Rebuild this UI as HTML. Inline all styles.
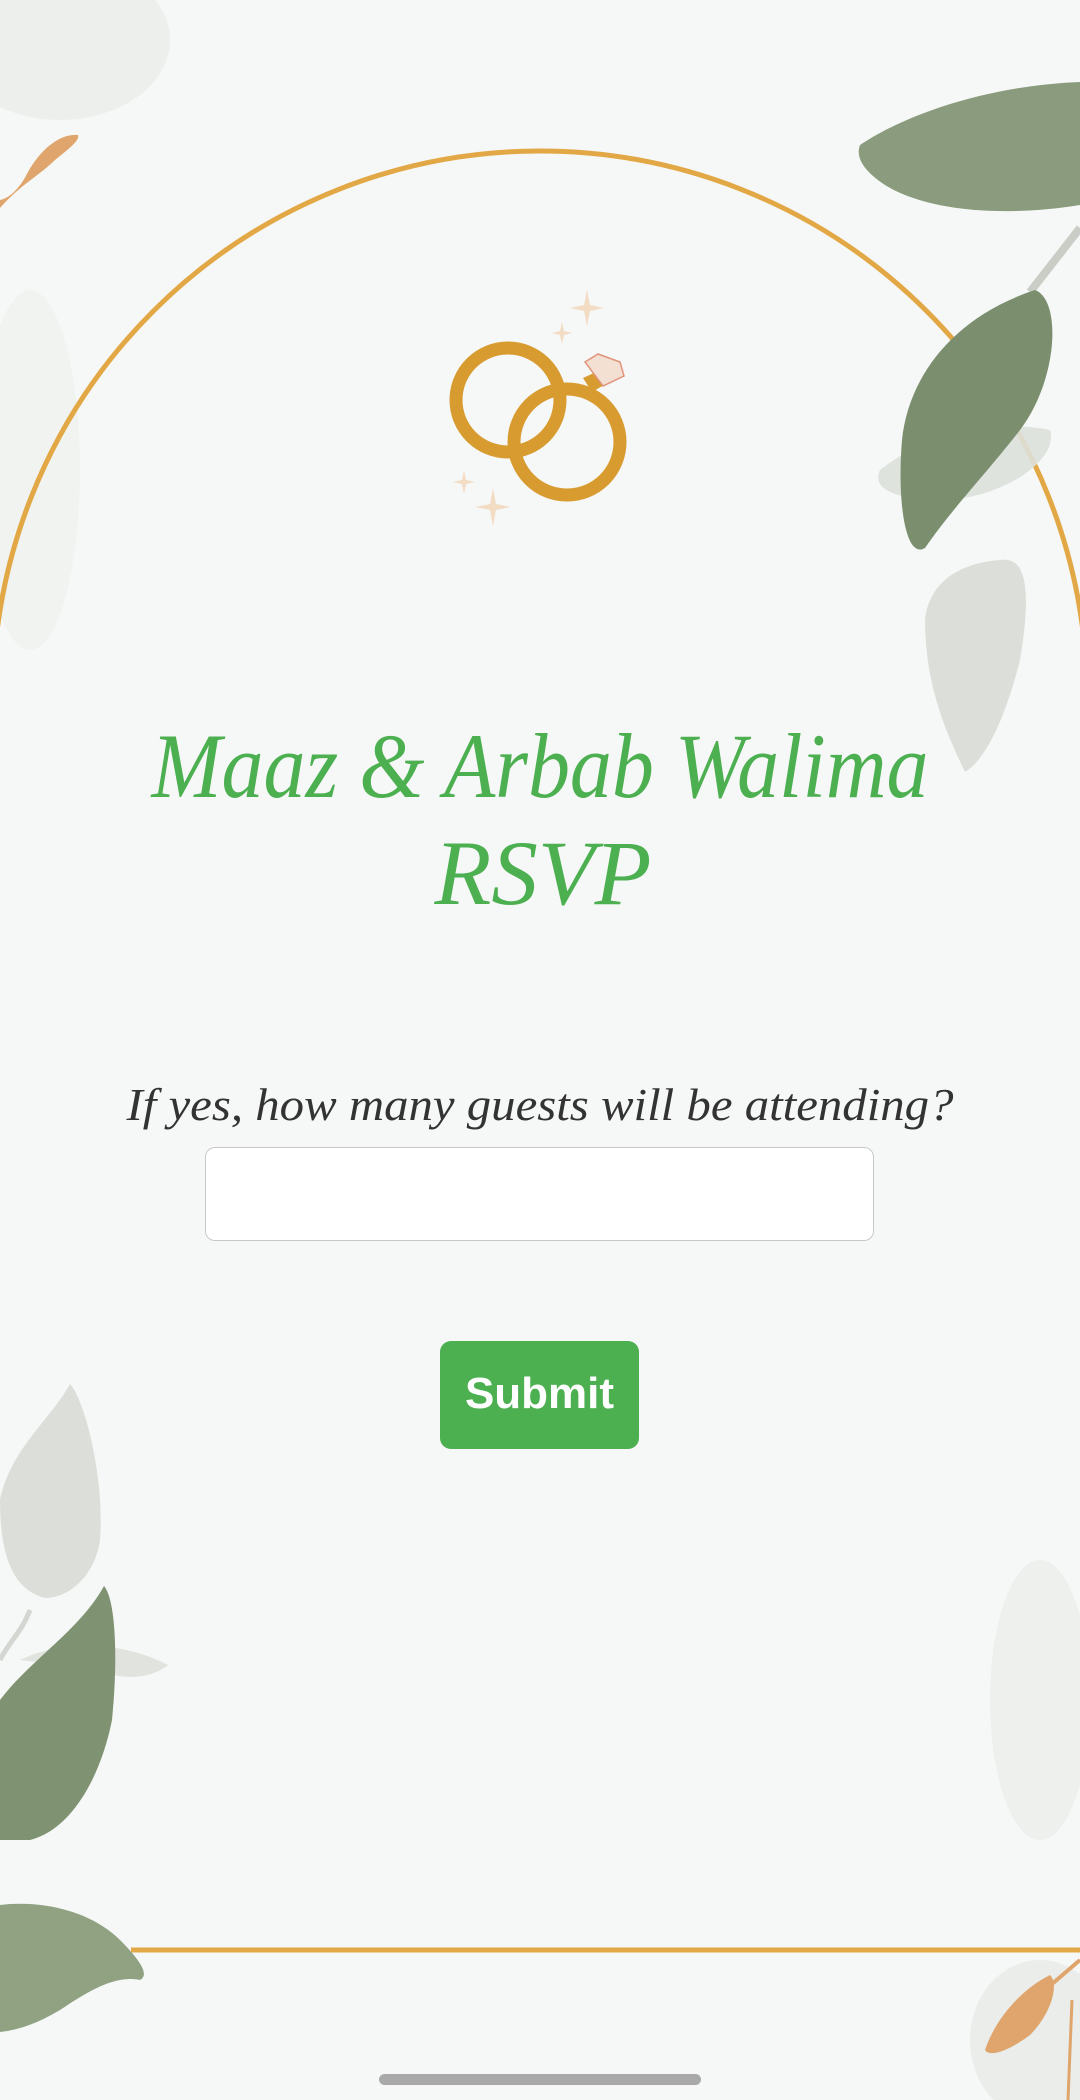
<!DOCTYPE html>
<html><head><meta charset="utf-8"><style>
html,body{margin:0;padding:0}
body{width:1080px;height:2100px;background:#f6f8f7;position:relative;overflow:hidden;font-family:"Liberation Sans",sans-serif}
svg{position:absolute;left:0;top:0}
.inp{position:absolute;left:205px;top:1147px;width:669px;height:94px;background:#fff;border:1.5px solid #c9c9c9;border-radius:10px;box-sizing:border-box}
.btn{position:absolute;left:440px;top:1341px;width:199px;height:108px;background:#4caf50;border-radius:11px;color:#fff;font-weight:bold;font-size:44px;text-align:center;line-height:106px}
.bar{position:absolute;left:379px;top:2074px;width:322px;height:11px;border-radius:6px;background:#a9a9a9}
</style></head><body>
<svg width="1080" height="2100" viewBox="0 0 1080 2100">
  <ellipse cx="60" cy="40" rx="110" ry="80" fill="#e6e8e4" opacity="0.55"/>
  <ellipse cx="30" cy="470" rx="50" ry="180" fill="#e8eae7" opacity="0.4"/>
  <ellipse cx="1040" cy="1700" rx="50" ry="140" fill="#e6e8e5" opacity="0.5"/>
  <ellipse cx="1040" cy="2040" rx="70" ry="80" fill="#e6e8e4" opacity="0.7"/>
  <path d="M -7 698 A 547 547 0 0 1 1087 698" fill="none" stroke="#e3a846" stroke-width="5"/>
  <line x1="131" y1="1950" x2="1080" y2="1950" stroke="#e3a846" stroke-width="5"/>
  <path d="M0 208 C20 185 40 175 55 160 C70 148 80 140 78 135 C60 133 40 150 28 172 C20 188 10 198 0 200Z" fill="#dfa56c"/>
  <path d="M1030 292 L1080 228" stroke="#c9cdc6" stroke-width="8"/>
  <path d="M880 470 C930 430 1000 420 1050 430 C1060 460 1000 500 940 500 C900 500 870 490 880 470Z" fill="#dde0da" opacity="0.9"/>
  <path d="M1000 560 C1030 555 1030 600 1020 660 C1005 720 985 760 965 772 C950 740 925 690 925 620 C930 575 970 562 1000 560Z" fill="#dcdfd9"/>
  <path d="M860 145 C900 118 980 86 1080 82 L1080 205 C1000 218 925 210 885 185 C865 172 855 158 860 145Z" fill="#8a9c7d"/>
  <path d="M1035 290 C1062 300 1058 380 1020 430 C985 475 955 505 925 548 C905 560 897 500 902 440 C908 380 950 318 1035 290Z" fill="#7b8e6e"/>
  <g fill="none" stroke="#d89b30" stroke-width="13">
    <circle cx="508" cy="400" r="52"/>
    <circle cx="567" cy="442" r="53"/>
  </g>
  <path d="M583 378 L596 372 L604 385 L592 392Z" fill="#d89b30"/>
  <path d="M585 362 L598 354 L620 362 L624 376 L603 386 Z" fill="#f3e0d2" stroke="#e0947a" stroke-width="1.5"/>
  <g fill="#f3dcc4">
    <path d="M587 290 L590 305 L604 308 L590 311 L587 326 L584 311 L570 308 L584 305Z"/>
    <path d="M562 322 L564 331 L572 333 L564 335 L562 344 L560 335 L552 333 L560 331Z"/>
    <path d="M464 470 L466 480 L475 482 L466 484 L464 494 L462 484 L453 482 L462 480Z"/>
    <path d="M493 488 L496 504 L511 507 L496 510 L493 526 L490 510 L475 507 L490 504Z"/>
  </g>
  <g fill="#4caf50" font-family="'Liberation Serif',serif" font-style="italic" text-anchor="middle">
    <text x="540" y="797" font-size="92" textLength="777" lengthAdjust="spacingAndGlyphs">Maaz &amp; Arbab Walima</text>
    <text x="543" y="904" font-size="92" textLength="217" lengthAdjust="spacingAndGlyphs">RSVP</text>
  </g>
  <text x="540" y="1120" fill="#333" font-family="'Liberation Serif',serif" font-style="italic" font-size="46" text-anchor="middle" textLength="827" lengthAdjust="spacingAndGlyphs">If yes, how many guests will be attending?</text>
  <path d="M0 1660 C10 1640 20 1635 30 1610" stroke="#d4d7d1" stroke-width="5" fill="none"/>
  <path d="M70 1384 C85 1400 105 1480 100 1540 C95 1575 70 1598 45 1598 C15 1590 0 1560 0 1500 C10 1450 50 1420 70 1384Z" fill="#dcdfd9"/>
  <path d="M20 1660 C60 1640 120 1640 168 1665 C150 1680 120 1680 100 1670 Z" fill="#e1e3de"/>
  <path d="M104 1586 C116 1600 118 1660 112 1720 C100 1780 70 1830 30 1840 L0 1840 L0 1700 C30 1660 80 1630 104 1586Z" fill="#7f9372"/>
  <path d="M0 1905 C40 1900 90 1910 120 1940 C140 1960 150 1975 140 1980 C115 1975 90 1990 60 2010 C40 2022 20 2030 0 2032Z" fill="#91a283"/>
  <path d="M1045 1990 L1080 1960" stroke="#dfa56c" stroke-width="4"/>
  <path d="M985 2050 C995 2020 1020 1990 1050 1975 C1060 1985 1050 2015 1030 2035 C1010 2050 990 2058 985 2050Z" fill="#dfa56c"/>
  <path d="M1072 2000 L1068 2100" stroke="#dfa56c" stroke-width="3"/>
</svg>
<div class="inp"></div>
<div class="btn">Submit</div>
<div class="bar"></div>
</body></html>
